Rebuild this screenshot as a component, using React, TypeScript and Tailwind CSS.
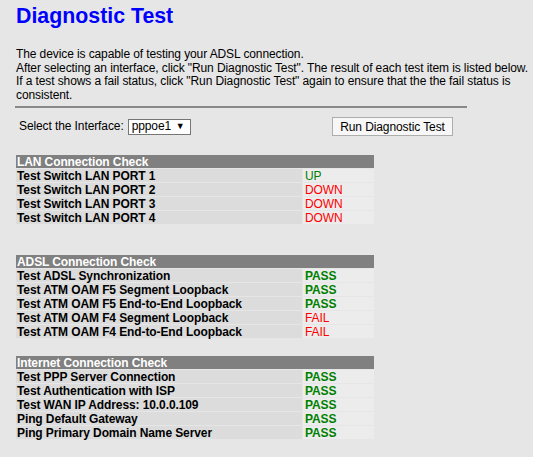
type Row = { label: string; result: string };

const lanRows: Row[] = [
  { label: "Test Switch LAN PORT 1", result: "UP" },
  { label: "Test Switch LAN PORT 2", result: "DOWN" },
  { label: "Test Switch LAN PORT 3", result: "DOWN" },
  { label: "Test Switch LAN PORT 4", result: "DOWN" },
];

const adslRows: Row[] = [
  { label: "Test ADSL Synchronization", result: "PASS" },
  { label: "Test ATM OAM F5 Segment Loopback", result: "PASS" },
  { label: "Test ATM OAM F5 End-to-End Loopback", result: "PASS" },
  { label: "Test ATM OAM F4 Segment Loopback", result: "FAIL" },
  { label: "Test ATM OAM F4 End-to-End Loopback", result: "FAIL" },
];

const internetRows: Row[] = [
  { label: "Test PPP Server Connection", result: "PASS" },
  { label: "Test Authentication with ISP", result: "PASS" },
  { label: "Test WAN IP Address: 10.0.0.109", result: "PASS" },
  { label: "Ping Default Gateway", result: "PASS" },
  { label: "Ping Primary Domain Name Server", result: "PASS" },
];

function Result({ value }: { value: string }) {
  if (value === "PASS") return <span className="font-bold text-[#008000]">PASS</span>;
  if (value === "UP") return <span className="text-[#008000]">UP</span>;
  return <span className="text-[#ff0000]">{value}</span>;
}

function CheckTable({ title, rows, className }: { title: string; rows: Row[]; className?: string }) {
  return (
    <div className={`flex w-[358px] flex-col gap-px ${className ?? ""}`}>
      <div className="h-[13px] bg-[#808080] pl-px font-bold leading-[14px] text-white">{title}</div>
      {rows.map((r) => (
        <div key={r.label} className="flex h-[13px] gap-px leading-[15px]">
          <div className="w-[286px] bg-[#dcdcdc] pl-px font-bold text-black">{r.label}</div>
          <div className="flex-1 bg-[#ececec] pl-[2px]">
            <Result value={r.result} />
          </div>
        </div>
      ))}
    </div>
  );
}

export default function App() {
  return (
    <div className="min-h-screen bg-[#e6e6e6] pl-4 pt-1 font-['Liberation_Sans',Arial,sans-serif] text-[12px] leading-[13.5px] tracking-[-0.1px] text-black">
      <h1 className="text-[21.33px] font-bold leading-[24px] tracking-normal text-[#0000ff]">Diagnostic Test</h1>

      <p className="mt-[20px] whitespace-nowrap">
        The device is capable of testing your ADSL connection.
        <br />
        After selecting an interface, click "Run Diagnostic Test". The result of each test item is listed below.
        <br />
        If a test shows a fail status, click "Run Diagnostic Test" again to ensure that the the fail status is
        <br />
        consistent.
      </p>

      <div className="ml-[-1px] mt-[4px] h-[2px] w-[452px] bg-[#888888]" />

      <div className="ml-[3px] mt-[9px] flex h-[19px] w-[434px] items-center justify-between">
        <div className="flex items-center gap-[4px]">
          <span>Select the Interface:</span>
          <div className="flex h-[16px] w-[63px] items-center justify-between border border-[#767676] bg-white pl-[3px] pr-[5px]">
            <span>pppoe1</span>
            <span className="text-[9px] leading-none">▼</span>
          </div>
        </div>
        <button className="h-[19px] w-[121px] border border-[#adadad] bg-[#f7f7f7] text-[12px] leading-none text-black">
          Run Diagnostic Test
        </button>
      </div>

      <CheckTable title="LAN Connection Check" rows={lanRows} className="mt-[19px]" />
      <CheckTable title="ADSL Connection Check" rows={adslRows} className="mt-[31px]" />
      <CheckTable title="Internet Connection Check" rows={internetRows} className="mt-[18px]" />
    </div>
  );
}
